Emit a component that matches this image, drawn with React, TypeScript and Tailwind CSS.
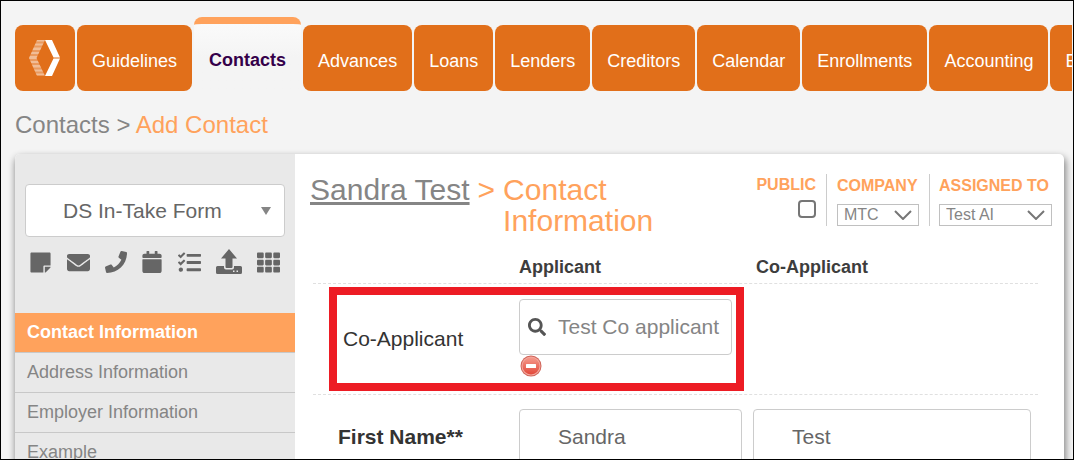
import { useState } from "react";
import {
  FaCalendar,
  FaEnvelope,
  FaPhone,
  FaSearch,
  FaStickyNote,
  FaTasks,
  FaTh,
} from "react-icons/fa";

const TABS = [
  "Guidelines",
  "Contacts",
  "Advances",
  "Loans",
  "Lenders",
  "Creditors",
  "Calendar",
  "Enrollments",
  "Accounting",
  "Banking",
];

const SECTIONS = [
  "Contact Information",
  "Address Information",
  "Employer Information",
  "Example",
];

function Logo() {
  return (
    <svg viewBox="0 0 32 38" className="h-[38px] w-8">
      <defs>
        <clipPath id="logo-left">
          <path d="M16 1H8L0 19l8 18h8L7.500 19z" />
        </clipPath>
      </defs>
      <path d="M16 1h7l8 17.500h-6.500zM24.500 19.500H31L23 37h-7z" fill="#fff" />
      <g clipPath="url(#logo-left)" fill="#fff">
        <rect width="16" height="38" opacity=".3" />
        <path
          opacity=".35"
          d="M0 1h16v1.500H0zM0 4.500h16v2H0zM0 8.500h16v2.500H0zM0 13h16v2H0zM0 17h16v3H0zM0 22h16v2H0zM0 26h16v2.500H0zM0 30.500h16v2H0zM0 34.500h16V36H0z"
        />
      </g>
    </svg>
  );
}

function UploadIcon() {
  return (
    <svg viewBox="0 0 26 26" className="h-[26px] w-[26px]" fill="currentColor">
      <path d="M13 0l8 9.500h-4.500V18a1 1 0 0 1-1 1h-5a1 1 0 0 1-1-1V9.500H5z" />
      <path
        fillRule="evenodd"
        d="M1.500 17H8v1.500a2 2 0 0 0 2 2h6a2 2 0 0 0 2-2V17h6.500a1.500 1.500 0 0 1 1.500 1.500v5a1.500 1.500 0 0 1-1.500 1.500h-23A1.500 1.500 0 0 1 0 23.500v-5A1.500 1.500 0 0 1 1.500 17zM17 21.500V23h1.500v-1.500zM20.500 21.500V23H22v-1.500z"
      />
    </svg>
  );
}

function RemoveIcon() {
  return (
    <svg viewBox="0 0 22 22" className="h-[22px] w-[22px]">
      <defs>
        <linearGradient id="remove" x1="0" y1="0" x2="0" y2="1">
          <stop offset="0" stopColor="#f59a8c" />
          <stop offset="1" stopColor="#e2483a" />
        </linearGradient>
      </defs>
      <circle cx="11" cy="11" r="10.500" fill="#d0655a" />
      <circle cx="11" cy="11" r="9.500" fill="#f4a99f" />
      <circle cx="11" cy="11" r="8.500" fill="url(#remove)" />
      <rect x="6" y="9" width="10" height="4" rx=".5" fill="#fff" />
    </svg>
  );
}

function Chevron() {
  return (
    <svg
      viewBox="0 0 18 10"
      className="pointer-events-none absolute right-[7px] top-[6px] h-[10px] w-[18px]"
      fill="none"
      stroke="#767676"
      strokeWidth="2"
    >
      <path d="M1 1l8 8 8-8" />
    </svg>
  );
}

const TOOLS = [
  { label: "Note", icon: <FaStickyNote size={23} /> },
  { label: "Email", icon: <FaEnvelope size={23} /> },
  { label: "Call", icon: <FaPhone size={22} /> },
  { label: "Calendar", icon: <FaCalendar size={22} /> },
  { label: "Tasks", icon: <FaTasks size={23} /> },
  { label: "Upload", icon: <UploadIcon /> },
  { label: "Grid", icon: <FaTh size={23} /> },
];

const META_LABEL = "text-[16px] leading-[22px] font-bold text-[#ffa25c]";
const META_SELECT =
  "block h-[22px] w-full appearance-none border border-[#c0c0c0] bg-white pl-[6px] text-[16px] leading-[20px] text-[#858585]";
const FIELD =
  "h-14 w-full rounded-[4px] border border-[#ccc] bg-white pl-[38px] text-[21px]";

export default function App() {
  const [section, setSection] = useState("Contact Information");
  const [coApplicant, setCoApplicant] = useState("Test Co applicant");

  return (
    <div className="flex h-screen flex-col overflow-hidden border border-black bg-[#f4f4f4] pl-[14px] font-['Liberation_Sans',Arial,sans-serif]">
      <nav className="mr-px flex shrink-0 items-end gap-[2px] overflow-hidden pt-4">
        <a
          href="#home"
          aria-label="Home"
          className="flex h-[66px] w-[60px] shrink-0 items-center justify-center rounded-lg bg-[#e16f1a]"
        >
          <Logo />
        </a>
        {TABS.map((tab) =>
          tab === "Contacts" ? (
            <a
              key={tab}
              href="#contacts"
              className="h-[74px] shrink-0 rounded-t-lg border-t-[7px] border-[#ffa25c] bg-linear-to-b from-[#fafafa] to-[#f4f4f4] to-50% px-[15px] pt-[26px] text-[18px] leading-5 font-bold text-[#34004a]"
            >
              {tab}
            </a>
          ) : (
            <a
              key={tab}
              href="#tab"
              className="h-[66px] shrink-0 rounded-lg bg-[#e16f1a] px-[15px] pt-[26px] text-[18px] leading-5 text-white"
            >
              {tab}
            </a>
          )
        )}
      </nav>

      <h1 className="mt-5 shrink-0 text-[24px] leading-7 text-[#858585]">
        Contacts &gt; <span className="text-[#ffa25c]">Add Contact</span>
      </h1>

      <div className="mt-[15px] mr-[9px] flex flex-1 rounded-t-[5px] bg-white shadow-[1px_4px_7px_1px_rgba(0,0,0,0.45)]">
        {/* Sidebar */}
        <aside className="w-[280px] shrink-0 rounded-tl-[5px] bg-[#e9e9e9] pt-[30px]">
          <div className="relative mx-[10px]">
            <select
              aria-label="Form"
              className="h-[53px] w-full appearance-none rounded-[4px] border border-[#ccc] bg-white pl-[37px] text-[21px] text-[#666]"
            >
              <option>DS In-Take Form</option>
            </select>
            <span className="pointer-events-none absolute top-[23px] right-[14px] border-x-[5px] border-t-8 border-x-transparent border-t-[#858585]" />
          </div>

          <div className="mt-3 flex h-[26px] items-center justify-between pr-[15px] pl-[14px] text-[#666]">
            {TOOLS.map((tool) => (
              <button key={tool.label} type="button" aria-label={tool.label}>
                {tool.icon}
              </button>
            ))}
          </div>

          <ul className="mt-[38px]">
            {SECTIONS.map((name) => (
              <li key={name} className="border-b border-[#c8c8c8]">
                <button
                  type="button"
                  onClick={() => setSection(name)}
                  className={
                    name === section
                      ? "block h-[39px] w-full bg-[#ffa25c] pl-3 text-left text-[18px] font-bold text-white"
                      : "block h-[39px] w-full pl-3 text-left text-[18px] text-[#858585]"
                  }
                >
                  {name}
                </button>
              </li>
            ))}
          </ul>
        </aside>

        <main className="min-w-0 flex-1 pt-5">
          <header className="flex h-20 items-start justify-between pr-3 pl-[15px]">
            <h2 className="flex gap-2 text-[30px] leading-[31px] text-[#ffa25c]">
              <a href="#contact" className="text-[#858585] underline">
                Sandra Test
              </a>
              <span>&gt;</span>
              <span>
                Contact
                <br />
                Information
              </span>
            </h2>

            <div className="flex">
              <div className="flex h-[52px] flex-col items-end pr-[10px]">
                <label htmlFor="public" className={META_LABEL}>
                  PUBLIC
                </label>
                <input
                  id="public"
                  type="checkbox"
                  className="mt-1 size-[18px] appearance-none rounded-[4px] border-2 border-[#767676] bg-white"
                />
              </div>
              <div className="h-[52px] w-[103px] border-l border-[#ccc] px-[10px]">
                <label htmlFor="company" className={META_LABEL}>
                  COMPANY
                </label>
                <div className="relative mt-[6px]">
                  <select id="company" className={META_SELECT}>
                    <option>MTC</option>
                  </select>
                  <Chevron />
                </div>
              </div>
              <div className="h-[52px] w-[123px] border-l border-[#ccc] pl-[9px]">
                <label htmlFor="assigned" className={META_LABEL}>
                  ASSIGNED TO
                </label>
                <div className="relative mt-[6px]">
                  <select id="assigned" className={META_SELECT}>
                    <option>Test AI</option>
                  </select>
                  <Chevron />
                </div>
              </div>
            </div>
          </header>

          <form className="mr-[26px] ml-[18px] text-[#333]">
            <div className="grid grid-cols-[206px_223px_1fr] border-b border-dashed border-[#e0e0e0] pb-[3px] text-[18px] leading-[26px] font-bold text-[#3d3d3d]">
              <span className="col-start-2">Applicant</span>
              <span className="pl-[14px]">Co-Applicant</span>
            </div>

            <div className="relative grid h-[111px] grid-cols-[206px_213px_1fr] border-b border-dashed border-[#e0e0e0] pt-[15px]">
              <div className="pointer-events-none absolute top-[3px] left-4 h-[104px] w-[415px] border-8 border-[#ed1c24]" />
              <label
                htmlFor="co-applicant"
                className="pt-[26px] pl-[30px] text-[21px] leading-7"
              >
                Co-Applicant
              </label>
              <div>
                <div className="relative">
                  <FaSearch
                    size={18}
                    className="pointer-events-none absolute top-[19px] left-[9px] text-[#555]"
                  />
                  <input
                    id="co-applicant"
                    value={coApplicant}
                    onChange={(e) => setCoApplicant(e.target.value)}
                    className={`${FIELD} text-[#858585]`}
                  />
                </div>
                <button
                  type="button"
                  aria-label="Remove co-applicant"
                  onClick={() => setCoApplicant("")}
                  className="ml-px block"
                >
                  <RemoveIcon />
                </button>
              </div>
            </div>

            <div className="grid grid-cols-[206px_223px_1fr] pt-[14px]">
              <label
                htmlFor="first-name"
                className="pt-[14px] pl-[25px] text-[21px] leading-7 font-bold"
              >
                First Name**
              </label>
              <input
                id="first-name"
                defaultValue="Sandra"
                className={`${FIELD} text-[#666]`}
              />
              <div className="pr-[7px] pl-[11px]">
                <input
                  aria-label="Co-applicant first name"
                  defaultValue="Test"
                  className={`${FIELD} text-[#666]`}
                />
              </div>
            </div>
          </form>
        </main>
      </div>
    </div>
  );
}
